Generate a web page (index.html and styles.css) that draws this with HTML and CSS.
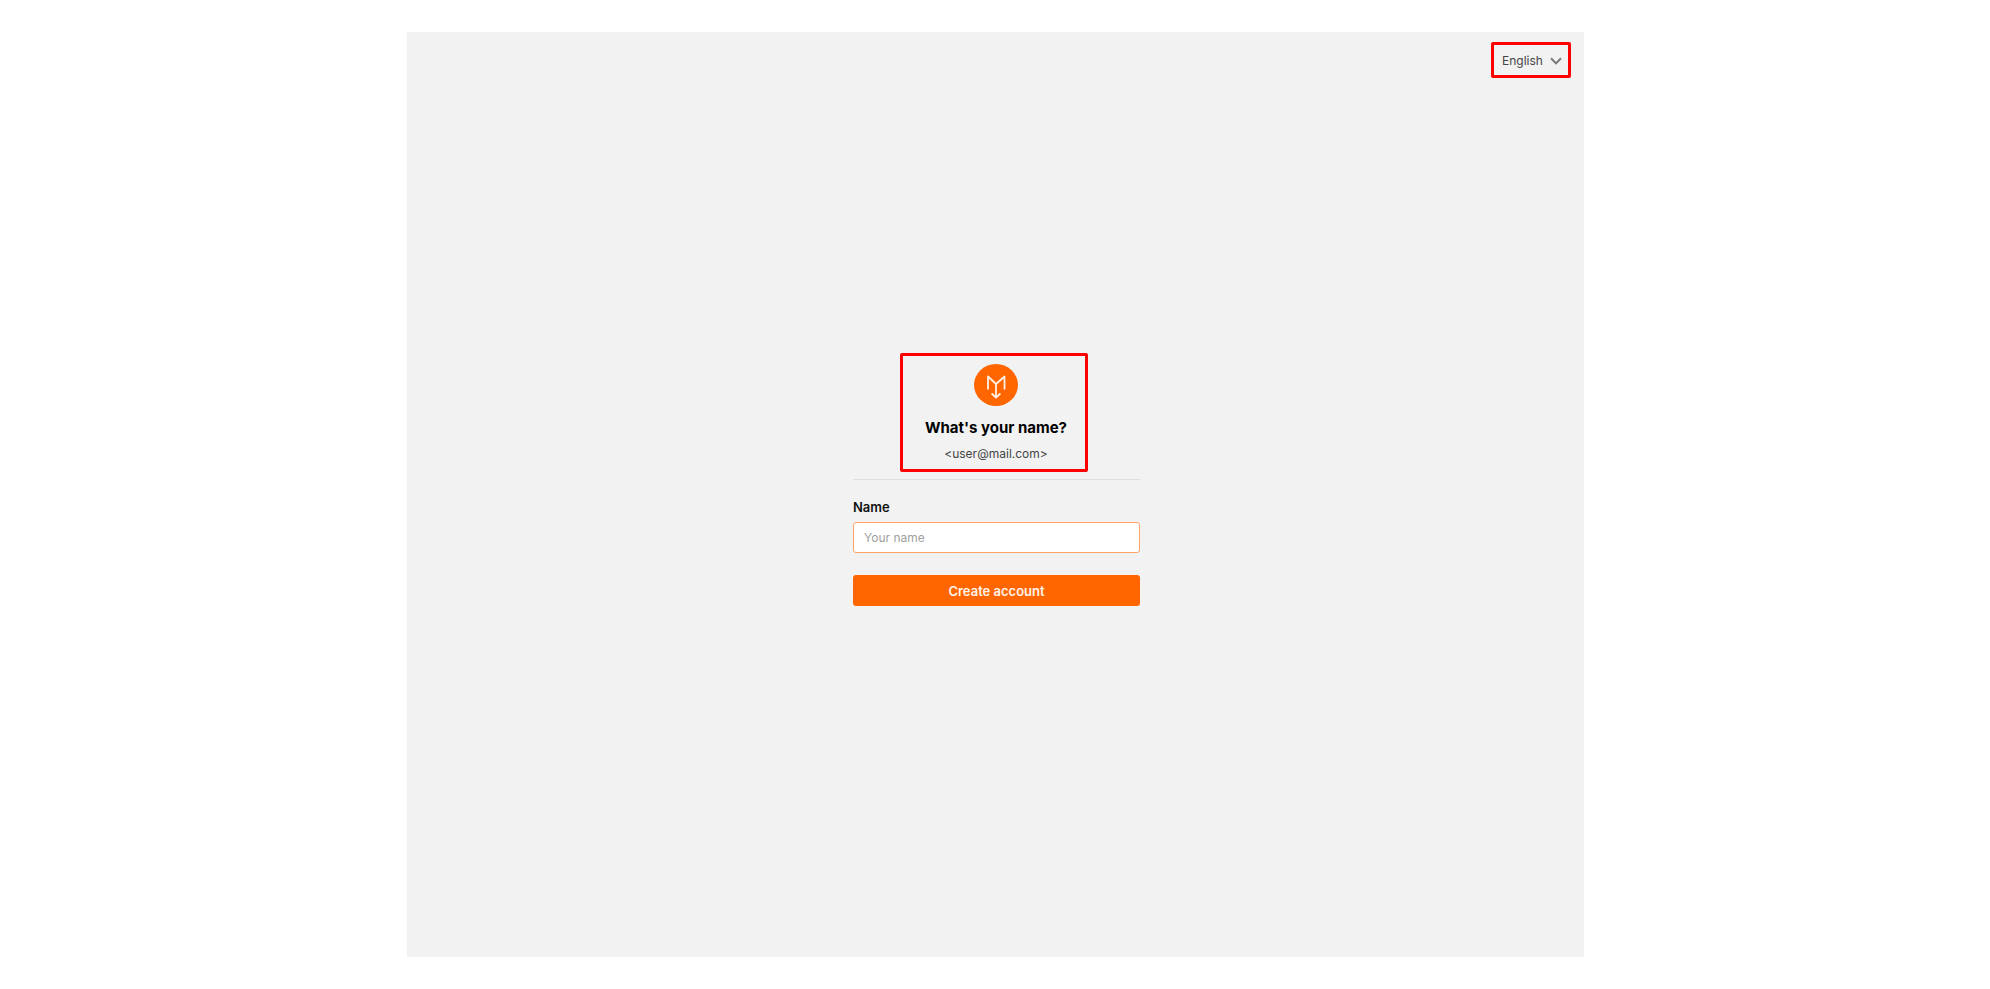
FILE: index.html
```
<!DOCTYPE html>
<html lang="en">
<head>
    <meta charset="UTF-8">
    <meta name="viewport" content="width=device-width, initial-scale=1.0">
    <title>Create account</title>
    <link rel="stylesheet" href="styles.css">
</head>
<body>
    <div class="page">
        <header class="top-bar">
            <div class="language">
                <select class="language-select" aria-label="Language">
                    <option>English</option>
                </select>
                <svg class="chevron" viewBox="0 0 12 8" aria-hidden="true">
                    <path d="M1 1.2 L6 6.4 L11 1.2"/>
                </svg>
            </div>
        </header>

        <main class="content">
            <form class="signup">
                <div class="intro">
                    <svg class="logo" viewBox="0 0 44 42" aria-hidden="true">
                        <ellipse class="logo-bg" cx="22" cy="21" rx="22" ry="21"/>
                        <path class="logo-mark" d="M14 25.5 V12.5 L22 20 L30.5 12.5 V25.5 M22 20 V33.5 M17.5 29.5 L22 33.5 L26.5 29.5"/>
                    </svg>
                    <h1>What's your name?</h1>
                    <p class="email">&lt;user@mail.com&gt;</p>
                </div>
                <hr>
                <label for="name">Name</label>
                <input type="text" id="name" placeholder="Your name">
                <button type="submit">Create account</button>
            </form>
        </main>
    </div>
</body>
</html>
```

FILE: styles.css
```
* {
    margin: 0;
    padding: 0;
    box-sizing: border-box;
}

body {
    font-family: Inter, "Liberation Sans", sans-serif;
    font-size: 12px;
    line-height: 16px;
    color: #111;
    background-color: #fff;
}

.page {
    display: flex;
    flex-direction: column;
    min-height: calc(100vh - 64px);
    margin: 32px 406px 32px 407px;
    background-color: #f2f2f2;
}

.top-bar {
    display: flex;
    justify-content: flex-end;
    padding: 10px 13px 0;
}

.language {
    display: flex;
    align-items: center;
    gap: 7px;
    height: 36px;
    padding: 1px 6px 0 8px;
    border: 3px solid #f00;
    border-radius: 2px;
}

.language-select {
    appearance: none;
    border: none;
    background: none;
    font: inherit;
    color: #444;
}

.chevron {
    width: 12px;
    height: 8px;
    fill: none;
    stroke: #777;
    stroke-width: 2;
}

.content {
    display: flex;
    flex: 1;
    flex-direction: column;
    justify-content: center;
    align-items: center;
    padding: 0 0 76px 2px;
}

.signup {
    display: flex;
    flex-direction: column;
    width: 287px;
}

.intro {
    display: flex;
    flex-direction: column;
    align-items: center;
    margin: 0 52px 0 47px;
    padding: 8px 0 7px 4px;
    border: 3px solid #f00;
    border-radius: 2px;
}

.logo {
    width: 44px;
    height: 42px;
}

.logo-bg {
    fill: #f60;
}

.logo-mark {
    fill: none;
    stroke: #fff0e6;
    stroke-width: 1.8;
    stroke-linejoin: round;
}

h1 {
    margin-top: 12px;
    font-size: 15px;
    line-height: 20px;
    color: #000;
}

.email {
    margin-top: 8px;
    color: #444;
}

hr {
    margin-top: 7px;
    border: none;
    border-top: 1px solid #dedede;
}

label {
    margin-top: 19px;
    font-size: 13px;
    font-weight: 600;
}

input {
    height: 31px;
    margin-top: 7px;
    padding: 0 10px;
    border: 1px solid #ffa366;
    border-radius: 3px;
    background-color: #fff;
    font: inherit;
}

input::placeholder {
    color: #a0a0a0;
}

button {
    height: 31px;
    margin-top: 22px;
    border: none;
    border-radius: 3px;
    background-color: #f60;
    color: #fff3eb;
    font: inherit;
    font-size: 13px;
    font-weight: 600;
    cursor: pointer;
}
```
